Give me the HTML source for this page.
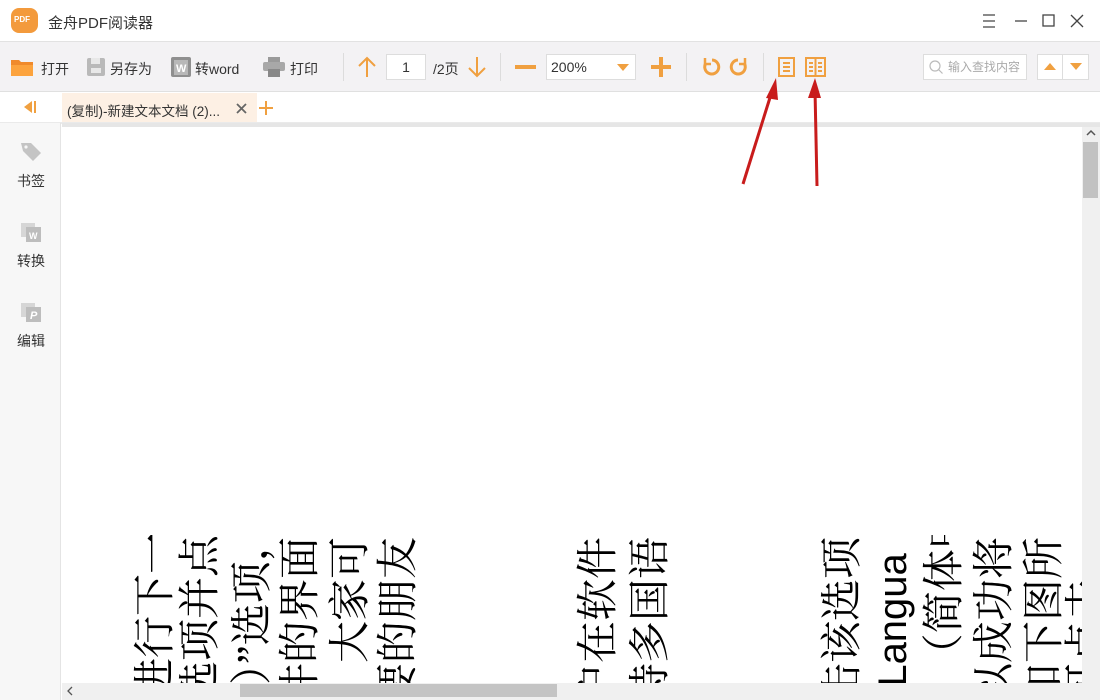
<!DOCTYPE html>
<html><head><meta charset="utf-8"><style>
*{margin:0;padding:0;box-sizing:border-box}
body{width:1100px;height:700px;overflow:hidden;background:#fff;font-family:"Liberation Sans","Noto Sans CJK SC",sans-serif;position:relative;color:#333}
.abs{position:absolute}
.title{left:0;top:0;width:1100px;height:42px;background:#fff;border-bottom:1px solid #e2e2e2}
.tb{left:0;top:42px;width:1100px;height:50px;background:#f3f2f4;border-bottom:1px solid #e0e0e0}
.t{font-size:14px;color:#333}
.sep{width:1px;height:28px;background:#dcdcdc;top:53px}
.side{left:0;top:123px;width:61px;height:577px;background:#f7f7f7;border-right:1px solid #e4e4e4}
.col{position:absolute;transform-origin:0 0;transform:rotate(-90deg);white-space:nowrap;font-family:"Liberation Serif","Noto Serif CJK SC",serif;font-size:42px;line-height:42px;color:#000}
</style></head><body>
<div class="abs title"></div>
<div class="abs" style="left:11px;top:8px;width:27px;height:25px;background:#f39a3c;border-radius:8px"></div>
<div class="abs" style="left:14px;top:15px;font-size:8px;color:#fff;font-weight:bold">PDF</div>
<div class="abs t" style="left:48px;top:12px;font-size:15px">金舟PDF阅读器</div>
<svg class="abs" style="left:980px;top:12px" width="110" height="18" viewBox="0 0 110 18" fill="none" stroke="#444" stroke-width="1.3">
<path d="M3 3h12M3 9h12M3 15h12"/><path d="M35 9h12"/><rect x="63" y="3" width="11" height="11"/><path d="M91 3l12 12M103 3L91 15"/></svg>

<div class="abs tb"></div>
<!-- open -->
<svg class="abs" style="left:10px;top:57px" width="24" height="20"><path d="M1 3h8l2 2h12v14H1z" fill="#f08a2b"/><path d="M1 8h22v11H1z" fill="#fca33d"/></svg>
<div class="abs t" style="left:41px;top:59px">打开</div>
<svg class="abs" style="left:86px;top:57px" width="20" height="20"><rect x="1" y="1" width="18" height="18" rx="2" fill="#b9b9b9"/><rect x="5" y="1" width="9" height="6" fill="#e8e8e8"/><rect x="5" y="11" width="10" height="5" fill="#e8e8e8"/></svg>
<div class="abs t" style="left:110px;top:59px">另存为</div>
<svg class="abs" style="left:171px;top:57px" width="20" height="20"><rect x="0" y="0" width="20" height="20" rx="2" fill="#8f8f8f"/><rect x="3" y="3" width="14" height="15" fill="#b8b8b8"/><text x="5" y="15" font-size="11" fill="#fff" font-weight="bold" font-family="Liberation Sans">W</text></svg>
<div class="abs t" style="left:195px;top:59px">转word</div>
<svg class="abs" style="left:263px;top:57px" width="22" height="20"><rect x="5" y="0" width="12" height="5" fill="#9a9a9a"/><rect x="0" y="5" width="22" height="9" rx="2" fill="#a8a8a8"/><rect x="5" y="12" width="12" height="8" fill="#888"/></svg>
<div class="abs t" style="left:290px;top:59px">打印</div>
<div class="abs sep" style="left:343px"></div>
<svg class="abs" style="left:357px;top:56px" width="20" height="22" fill="none" stroke="#f0a040" stroke-width="2"><path d="M10 21V2M2 10l8-8 8 8"/></svg>
<div class="abs" style="left:386px;top:54px;width:40px;height:26px;background:#fff;border:1px solid #ddd;font-size:14px;text-align:center;line-height:24px">1</div>
<div class="abs t" style="left:433px;top:59px">/2页</div>
<svg class="abs" style="left:467px;top:56px" width="20" height="22" fill="none" stroke="#f0a040" stroke-width="2"><path d="M10 1v19M2 12l8 8 8-8"/></svg>
<div class="abs sep" style="left:500px"></div>
<div class="abs" style="left:515px;top:65px;width:21px;height:4px;background:#f0a040"></div>
<div class="abs" style="left:546px;top:54px;width:90px;height:26px;background:#fff;border:1px solid #ddd;font-size:14px;line-height:24px;padding-left:4px">200%</div>
<div class="abs" style="left:617px;top:64px;width:0;height:0;border-left:6px solid transparent;border-right:6px solid transparent;border-top:7px solid #f0a040"></div>
<svg class="abs" style="left:650px;top:56px" width="22" height="22" stroke="#f0a040" stroke-width="4"><path d="M11 1v20M1 11h20"/></svg>
<div class="abs sep" style="left:686px"></div>
<svg class="abs" style="left:700px;top:56px" width="50" height="22" fill="none" stroke="#f0a040" stroke-width="3"><path d="M6 7a7 7 0 1 0 6-3"/><path d="M5 2v6h6" stroke-width="2.5"/><path d="M44 7a7 7 0 1 1-6-3"/><path d="M45 2v6h-6" stroke-width="2.5"/></svg>
<div class="abs sep" style="left:763px"></div>
<svg class="abs" style="left:777px;top:56px" width="52" height="22" fill="none" stroke="#f0a040" stroke-width="2"><rect x="2" y="2" width="15" height="18"/><path d="M6 7h7M6 11h7M6 15h7"/><rect x="29" y="2" width="19" height="18"/><path d="M38.5 2v18M32 7h4M32 11h4M32 15h4M41 7h4M41 11h4M41 15h4"/></svg>
<div class="abs" style="left:923px;top:54px;width:104px;height:26px;background:#fff;border:1px solid #ddd;font-size:12px;color:#aaa;line-height:24px;padding-left:24px">输入查找内容</div>
<svg class="abs" style="left:929px;top:60px" width="14" height="14" fill="none" stroke="#bbb" stroke-width="1.2"><circle cx="6" cy="6" r="5"/><path d="M9.5 9.5l4 4"/></svg>
<div class="abs" style="left:1037px;top:54px;width:52px;height:26px;background:#fff;border:1px solid #ddd"></div>
<div class="abs" style="left:1062px;top:54px;width:1px;height:26px;background:#ddd"></div>
<div class="abs" style="left:1044px;top:63px;border-left:6px solid transparent;border-right:6px solid transparent;border-bottom:7px solid #f0a040"></div>
<div class="abs" style="left:1070px;top:63px;border-left:6px solid transparent;border-right:6px solid transparent;border-top:7px solid #f0a040"></div>

<!-- tab row -->
<div class="abs" style="left:24px;top:101px;width:0;height:0;border-top:6px solid transparent;border-bottom:6px solid transparent;border-right:8px solid #f0a040"></div>
<div class="abs" style="left:34px;top:101px;width:2px;height:12px;background:#f0a040"></div>
<div class="abs" style="left:62px;top:93px;width:195px;height:30px;background:#fdf0e4"></div>
<div class="abs" style="left:67px;top:100px;font-size:13.5px">(复制)-新建文本文档 (2)...</div>
<svg class="abs" style="left:236px;top:103px" width="11" height="11" stroke="#666" stroke-width="1.8"><path d="M1 1l9 9M10 1l-9 9"/></svg>
<svg class="abs" style="left:259px;top:101px" width="14" height="14" stroke="#f0a040" stroke-width="2"><path d="M7 0v14M0 7h14"/></svg>
<div class="abs" style="left:0;top:122px;width:1100px;height:2px;background:#eaeaea"></div>
<div class="abs" style="left:62px;top:123px;width:1038px;height:4px;background:#e6e6e6"></div>

<!-- sidebar -->
<div class="abs side"></div>
<svg class="abs" style="left:20px;top:141px" width="22" height="22"><path d="M1 2h10l10 10-8 8L3 10z" fill="#c4c4c4"/><circle cx="6" cy="6" r="1.6" fill="#f7f7f7"/></svg>
<div class="abs t" style="left:17px;top:171px">书签</div>
<svg class="abs" style="left:20px;top:221px" width="22" height="22"><rect x="1" y="2" width="14" height="14" fill="#d6d6d6"/><rect x="6" y="6" width="15" height="15" fill="#bdbdbd"/><text x="9" y="18" font-size="9" fill="#fff" font-weight="bold" font-family="Liberation Sans">W</text></svg>
<div class="abs t" style="left:17px;top:251px">转换</div>
<svg class="abs" style="left:20px;top:301px" width="22" height="22"><rect x="1" y="2" width="14" height="14" fill="#d6d6d6"/><rect x="6" y="6" width="15" height="15" fill="#bdbdbd"/><text x="10" y="18" font-size="11" fill="#fff" font-weight="bold" font-style="italic" font-family="Liberation Sans">P</text></svg>
<div class="abs t" style="left:17px;top:331px">编辑</div>

<!-- document -->
<div class="abs" style="left:62px;top:535px;width:1020px;height:148px;overflow:hidden">
<div class="col" style="left:73px;top:165px">进行下一</div>
<div class="col" style="left:118px;top:168px">选项并点</div>
<div class="col" style="left:170px;top:150px">）”选项，</div>
<div class="col" style="left:218px;top:170px">件的界面</div>
<div class="col" style="left:268px;top:128px">大家可</div>
<div class="col" style="left:316px;top:170px">要的朋友</div>
<div class="col" style="left:516px;top:170px">户在软件</div>
<div class="col" style="left:568px;top:170px">持多国语</div>
<div class="col" style="left:760px;top:170px">击该选项</div>
<div class="col" style="left:810px;top:165px;font-family:'Liberation Sans',sans-serif;font-size:40px">“Langua</div>
<div class="col" style="left:862px;top:170px">▌（简体中</div>
<div class="col" style="left:912px;top:170px">以成功将</div>
<div class="col" style="left:962px;top:170px">如下图所</div>
<div class="col" style="left:1004px;top:170px">可点击</div>
</div>
<!-- scrollbars -->
<div class="abs" style="left:1082px;top:127px;width:18px;height:556px;background:#f0f0f0"></div>
<svg class="abs" style="left:1086px;top:129px" width="10" height="8" fill="none" stroke="#555" stroke-width="1.5"><path d="M1 6l4-4 4 4"/></svg>
<div class="abs" style="left:1083px;top:142px;width:15px;height:56px;background:#c2c2c2"></div>
<div class="abs" style="left:62px;top:683px;width:1038px;height:17px;background:#f0f0f0"></div>
<div class="abs" style="left:240px;top:684px;width:317px;height:13px;background:#c4c4c4"></div>
<svg class="abs" style="left:66px;top:686px" width="8" height="10" fill="none" stroke="#555" stroke-width="1.3"><path d="M6 1L2 5l4 4"/></svg>

<!-- red arrows -->
<svg class="abs" style="left:0;top:0" width="1100" height="700">
<path d="M743 184L773 88" stroke="#c81c1c" stroke-width="3"/><path d="M776 78l-10 20 12 2z" fill="#c81c1c"/>
<path d="M817 186L815 90" stroke="#c81c1c" stroke-width="3"/><path d="M815 78l-7 20h13z" fill="#c81c1c"/>
</svg>
</body></html>
